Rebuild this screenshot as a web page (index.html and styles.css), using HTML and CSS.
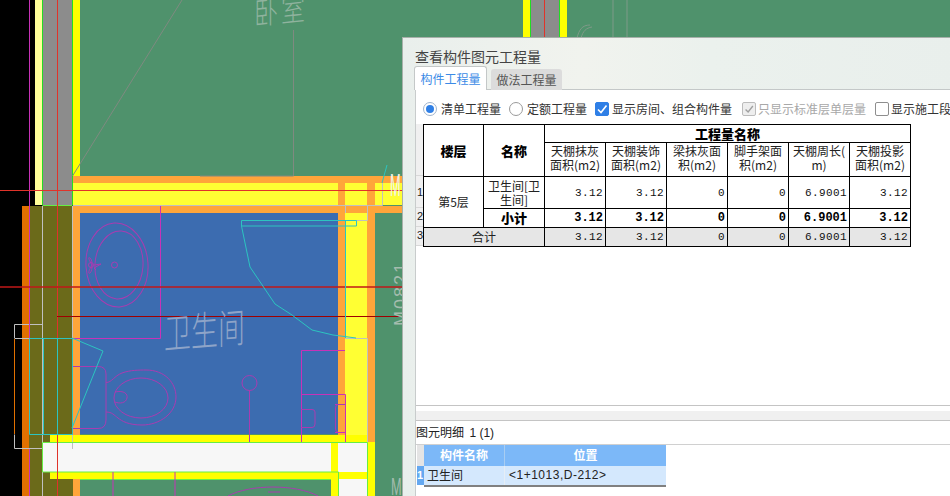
FILE: index.html
```html
<!DOCTYPE html>
<html lang="zh">
<head>
<meta charset="utf-8">
<title>查看构件图元工程量</title>
<link rel="stylesheet" href="styles.css">
</head>
<body>
<div class="stage">
  <svg class="cad" width="950" height="496" viewBox="0 0 950 496">
    <rect class="f-black" x="0" y="0" width="950" height="496"/>
    <rect class="f-room" x="73" y="0" width="877" height="496"/>
    <rect class="f-pale" x="35" y="0" width="7" height="205"/>
    <rect class="f-gray" x="43" y="0" width="29" height="205"/>
    <rect class="f-yellow" x="73" y="0" width="7" height="176"/>
    <rect class="f-line-green" x="42" y="0" width="1" height="205"/>
    <rect class="f-line-green" x="72" y="0" width="1" height="205"/>
    <rect class="f-yellow" x="523" y="0" width="7" height="60"/>
    <rect class="f-gray" x="531" y="0" width="28" height="60"/>
    <rect class="f-line-green" x="530" y="0" width="1" height="60"/>
    <rect class="f-line-green" x="559" y="0" width="1" height="60"/>
    <rect class="f-yellow" x="560" y="0" width="7" height="60"/>

    <rect class="f-orange" x="73" y="176" width="329" height="7"/>
    <rect class="f-bright" x="73" y="183" width="329" height="22"/>
    <rect class="f-orange" x="73" y="206" width="329" height="7"/>
    <rect class="f-blue" x="80" y="213" width="258" height="221"/>
    <rect class="f-orange" x="338" y="183" width="7" height="252"/>
    <rect class="f-bright" x="345" y="213" width="22" height="222"/>
    <rect class="f-orange" x="367" y="183" width="8" height="259"/>
    <rect class="f-orange" x="73" y="206" width="7" height="290"/>
    <rect class="f-deep" x="22" y="206" width="7" height="290"/>
    <rect class="f-olive" x="29" y="206" width="44" height="290"/>

    <rect class="f-yellow" x="50" y="435" width="317" height="7"/>
    <rect class="f-yellow" x="50" y="472" width="317" height="7"/>
    <rect class="f-white" x="42" y="442" width="325" height="30"/>
    <rect class="f-white" x="339" y="479" width="28" height="17"/>
    <rect class="f-room" x="80" y="479" width="251" height="17"/>
    <rect class="f-yellow" x="331" y="442" width="7" height="54"/>
    <rect class="f-yellow" x="367" y="442" width="8" height="54"/>

    <path class="s-gray" d="M72.500 176L182 0M293.500 30V176H200"/>
    <path class="s-light" d="M42.500 206V442M42.500 472V496M72.500 206V338M73 205.500H382.500V183M345.500 205V213M367.500 205V220.500H345M345 338.500H367.500V442M14.500 338V324.500H42M14.500 338.500H42M14.500 434.500V448.500H42M72.500 434V449"/>
    <path class="s-orangeline" d="M14.500 339V434"/>
    <path class="s-green" d="M42.500 205.500H72.500M42.500 472V442.500H367.500V496M42.500 472H338.500V496M80 479.500H331"/>
    <path class="s-magenta" d="M29.500 0V206M29.500 206V338M29.500 449V496M160.500 206V338.500H73M73 366.500H80M73 428.500H80M301.500 442V350.500H345M301.500 394.500H345.500V442M335 404.500H345M335 432.500H345M113 472V496M175 472V496"/>
    <path class="s-purple" d="M72 366.500H98Q106 366.500 106 374V420Q106 428.500 98 428.500H72M106 382.500C112 382.500 114 376 122 373C130 370 140 370 146 370C165 370 176 383 176 397C176 413 160 425 142 425C128 425 122 421 118 418C114 415 112 412 106 412M115 392C124 390 128 394 127 398C126 403 120 404 115 402M249.500 390V442M301 409.500H312Q315 409.500 315 412V424Q315 427.500 312 427.500H301M345 404.500H338Q335.500 404.500 335.500 408V429Q335.500 432 338 432"/>
    <ellipse class="s-purple" cx="141" cy="398" rx="27" ry="20"/>
    <ellipse class="s-purple" cx="117" cy="265" rx="31" ry="42" transform="rotate(-4 117 265)"/>
    <ellipse class="s-purple" cx="119" cy="265" rx="24" ry="34" transform="rotate(4 119 265)"/>
    <circle class="s-purple" cx="114.500" cy="265" r="3"/>
    <path class="s-purple" d="M94 265L101 264L94 268L96 270M92 265C88 258 88 257 90 258C92 260 92 262 92 265M92 265C88 272 88 274 90 273C92 271 92 268 92 265"/>
    <circle class="s-purple" cx="91" cy="265" r="2.500"/>
    <circle class="s-purple" cx="249.500" cy="383" r="7.500"/>
    <path class="s-purple" d="M228 496C250 484 296 484 318 496M268 492H280"/>
    <path class="s-red" d="M0 190.500H402M57.500 0V496M544.500 0V60"/>
    <path class="s-darkred" d="M0 287H402"/>
    <path class="s-maroon" d="M57 316.500H402"/>
    <path class="s-cyan" d="M29.500 434.500V338.500H72.500V434.500ZM43.500 338V434M57.500 338V434M72 338L103 351L72 428M241.500 220.500H356.500V226H241.500ZM241.500 226L250 267L275 304L292 315L312 330L333 335L356 338M345.500 220V338M382 183L387 165"/>
    <path class="s-sketch" d="M577 38C579 30 582 25 590 25M581 38C583 31 586 28 592 27M613 0V37M627 0V37"/>
    <text class="t-cad t-room" transform="translate(254 25) skewY(-6) scale(1 1.300)">卧室</text>
    <text class="t-cad t-bath" transform="translate(164 349) skewY(-5) scale(1 1.500)">卫生间</text>
    <text class="t-cad t-code" transform="translate(407 326) rotate(-90)">M0821</text>
    <text class="t-cad t-m t-m-top" transform="translate(390 196) scale(.8 2)">M</text>
    <text class="t-cad t-m" transform="translate(391 495) scale(.8 1.500)">M</text>
  </svg>

  <section class="dialog">
    <h1 class="dialog-title">查看构件图元工程量</h1>
    <div class="tabs">
      <div class="tab tab-active">构件工程量</div>
      <div class="tab">做法工程量</div>
    </div>
    <div class="panel">
      <div class="options">
        <label class="opt"><span class="radio radio-on"></span>清单工程量</label>
        <label class="opt"><span class="radio"></span>定额工程量</label>
        <label class="opt">
          <span class="check check-on"><svg width="14" height="14" viewBox="0 0 14 14"><path d="M3 7.500L6 10.500L11.500 3.500"/></svg></span>显示房间、组合构件量
        </label>
        <label class="opt opt-off">
          <span class="check check-off"><svg width="12" height="12" viewBox="0 0 14 14"><path d="M3 7.500L6 10.500L11.500 3.500"/></svg></span>只显示标准层单层量
        </label>
        <label class="opt opt-last"><span class="check"></span>显示施工段</label>
      </div>

      <div class="grid-wrap">
        <div class="row-heads">
          <div class="rh rh-top"></div>
          <div class="rh rh-1">1</div>
          <div class="rh rh-2">2</div>
          <div class="rh rh-3">3</div>
        </div>
        <table class="qty">
          <colgroup>
            <col class="c-a"><col class="c-b"><col class="c-num"><col class="c-num"><col class="c-num"><col class="c-num"><col class="c-num"><col class="c-num">
          </colgroup>
          <thead>
            <tr class="r-a">
              <th rowspan="2" class="big">楼层</th>
              <th rowspan="2" class="big">名称</th>
              <th colspan="6" class="big">工程量名称</th>
            </tr>
            <tr class="r-b">
              <td class="sub">天棚抹灰<br>面积(m2)</td>
              <td class="sub">天棚装饰<br>面积(m2)</td>
              <td class="sub">梁抹灰面<br>积(m2)</td>
              <td class="sub">脚手架面<br>积(m2)</td>
              <td class="sub">天棚周长(<br>m)</td>
              <td class="sub">天棚投影<br>面积(m2)</td>
            </tr>
          </thead>
          <tbody>
            <tr class="r-c">
              <td rowspan="2" class="ctr">第5层</td>
              <td class="ctr">卫生间[卫<br>生间]</td>
              <td class="num">3.12</td><td class="num">3.12</td><td class="num">0</td><td class="num">0</td><td class="num">6.9001</td><td class="num">3.12</td>
            </tr>
            <tr class="r-d">
              <th class="big">小计</th>
              <td class="num b">3.12</td><td class="num b">3.12</td><td class="num b">0</td><td class="num b">0</td><td class="num b">6.9001</td><td class="num b">3.12</td>
            </tr>
            <tr class="r-e">
              <td colspan="2" class="ctr">合计</td>
              <td class="num">3.12</td><td class="num">3.12</td><td class="num">0</td><td class="num">0</td><td class="num">6.9001</td><td class="num">3.12</td>
            </tr>
          </tbody>
        </table>
      </div>

      <div class="splitter"></div>
      <div class="detail-head">图元明细&nbsp;&nbsp;<span class="count">1 (1)</span></div>
      <div class="detail">
        <div class="d-heads">
          <div class="d-rh"></div>
          <div class="d-rh d-rh-on">1</div>
        </div>
        <div class="d-table">
          <div class="d-row d-row-head"><div class="d-a">构件名称</div><div class="d-b">位置</div></div>
          <div class="d-row d-row-body"><div class="d-a">卫生间</div><div class="d-b">&lt;1+1013,D-212&gt;</div></div>
        </div>
      </div>
    </div>
  </section>
</div>
</body>
</html>
```

FILE: styles.css
```css
* { box-sizing: border-box; }
html, body { margin: 0; padding: 0; overflow: hidden; }
body { width: 950px; height: 496px; font-family: "Noto Sans CJK SC", "Liberation Sans", sans-serif; }

.stage { position: relative; width: 950px; height: 496px; overflow: hidden; background: #000; }
.cad { position: absolute; left: 0; top: 0; display: block; }
.cad rect { shape-rendering: crispEdges; }

.f-black { fill: #000; }
.f-room { fill: #4f926c; }
.f-pale { fill: #ffff99; }
.f-gray { fill: #8c8c8c; }
.f-yellow { fill: #ffff00; }
.f-bright { fill: #ffff33; }
.f-orange { fill: #ffa53a; }
.f-blue { fill: #3c6cb0; }
.f-deep { fill: #e07000; }
.f-olive { fill: #6b6a1a; }
.f-white { fill: #f7f7f7; }
.f-line-green { fill: #22dd22; }

.cad path, .cad ellipse, .cad circle { fill: none; stroke-width: 1; }
.s-green { stroke: #66ee44; }
.s-gray { stroke: #7f8a80; }
.s-light { stroke: #c0c0c0; }
.s-orangeline { stroke: #e07000; }
.s-magenta { stroke: #c832b8; }
.cad .s-purple { stroke: #a93cb0; }
.s-red { stroke: #e0332a; }
.cad .s-darkred { stroke: #c01818; stroke-opacity: .75; stroke-width: 2; }
.s-maroon { stroke: #a00000; }
.cad .s-cyan { stroke: #2cc4c0; }
.s-sketch { stroke: #7f9a88; }

.t-cad { font-family: "Noto Sans CJK SC", "Liberation Sans", sans-serif; font-weight: 300; }
.t-room { font-size: 24px; letter-spacing: 3px; fill: #8fb39e; }
.t-bath { font-size: 27px; fill: #8ea4c8; }
.t-code { font-size: 18px; letter-spacing: 2px; fill: #a4bcae; font-family: "Liberation Sans", sans-serif; }
.t-m { font-size: 16px; fill: #a4bcae; font-family: "Liberation Sans", sans-serif; }
.t-m-top { fill: #f0f4e8; }

.dialog {
  position: absolute; left: 402px; top: 37px; width: 560px; height: 470px;
  display: flex; flex-direction: column;
  border: 1px solid #a8b0aa;
  background: linear-gradient(90deg, #e9efec 0%, #f1f3ee 32%, #ebf1ed 55%, #e9efec 100%);
}
.dialog-title { margin: 0; height: 28px; padding: 8px 0 0 12px; font-size: 14px; line-height: 20px; font-weight: 400; color: #444; }

.tabs { display: flex; align-items: flex-end; height: 24px; padding-left: 11px; gap: 4px; margin-bottom: -1px; position: relative; z-index: 1; }
.tab { height: 21px; width: 71px; border-radius: 3px 3px 0 0; background: #dcdcdc; color: #555; font-size: 12px; line-height: 21px; text-align: center; }
.tab-active { height: 24px; width: 73px; line-height: 24px; background: #fff; color: #3b8ae6; border: 1px solid #c4c8c8; border-bottom: 0; }

.panel { flex: 1; margin-left: 12px; display: flex; flex-direction: column; background: #fff; border-top: 1px solid #c4c8c8; border-left: 1px solid #c8cccc; }

.options { display: flex; gap: 8px; height: 28px; padding: 9px 0 0 7px; white-space: nowrap; flex: none; }
.opt { display: flex; align-items: center; gap: 4px; height: 19px; font-size: 12px; color: #333; }
.opt-off { color: #a8a8a8; margin-left: 2px; }
.opt-last { margin-left: 1px; }
.radio { width: 14px; height: 14px; border-radius: 50%; border: 1px solid #9a9a9a; background: #fff; display: flex; align-items: center; justify-content: center; }
.radio-on { border-color: #a0b4cc; }
.radio-on::after { content: ""; width: 8px; height: 8px; border-radius: 50%; background: #2f7fe6; }
.check { width: 14px; height: 14px; border: 1px solid #8e8e8e; border-radius: 2px; background: #fff; display: flex; align-items: center; justify-content: center; margin-right: -2px; }
.check svg { display: block; flex: none; }
.check path { fill: none; stroke-width: 1.600; }
.check-on { background: #2f7fe6; border-color: #2f7fe6; margin-right: -1px; }
.check-on path { stroke: #fff; }
.check-off { background: #eeeeee; border-color: #bcbcbc; }
.check-off path { stroke: #a0a0a0; }

.grid-wrap { display: flex; height: 287px; padding-top: 6px; flex: none; }
.row-heads { width: 7px; flex: none; overflow: hidden; font-size: 11px; color: #222; }
.rh { background: #f0f0f0; border-bottom: 1px solid #d8d8d8; font-family: "Liberation Sans", sans-serif; line-height: 16px; padding-left: 1px; }
.rh-top { height: 52px; }
.rh-1 { height: 32px; padding-top: 8px; }
.rh-2 { height: 19px; }
.rh-3 { height: 19px; }

.qty { border-collapse: collapse; table-layout: fixed; width: 488px; height: 122px; align-self: flex-start; font-size: 12px; color: #111; }
.c-a { width: 60px; }
.c-b { width: 61px; }
.c-num { width: 61px; }
.qty th, .qty td { border: 1px solid #000; padding: 0; text-align: center; line-height: 14px; font-size: 12px; }
.qty th { font-weight: 700; }
.qty .big { font-size: 13px; font-weight: 900; color: #000; }
.r-a { height: 18px; }
.r-b { height: 34px; }
.r-c { height: 32px; }
.r-d { height: 19px; }
.r-e { height: 19px; background: #e6e6e6; }
.qty .num { text-align: right; padding-right: 2px; font-family: "Liberation Mono", monospace; font-size: 11px; letter-spacing: .4px; }
.qty .b { font-weight: 700; font-size: 12px; letter-spacing: 0; color: #000; }
.qty .sub { color: #222; padding-bottom: 3px; }
.ctr { color: #222; }

.splitter { height: 15px; border-top: 1px solid #c4c4c4; background: linear-gradient(#fff 0, #fff 5px, #f0f0f0 5px); flex: none; }
.detail-head { height: 25px; border-top: 1px solid #c4c4c4; border-bottom: 1px solid #d0d0d0; font-size: 12px; line-height: 21px; color: #222; flex: none; }
.count { font-family: "Liberation Sans", sans-serif; }
.detail { display: flex; padding-left: 1px; flex: none; }
.d-heads { width: 7px; flex: none; }
.d-rh { height: 21px; background: #e4e4e4; }
.d-rh-on { height: 19px; background: #64a8f0; color: #fff; font-size: 11px; font-weight: 700; line-height: 19px; font-family: "Liberation Sans", sans-serif; overflow: hidden; }
.d-table { width: 242px; border-bottom: 2px solid #808080; }
.d-row { display: flex; }
.d-row-head { height: 21px; background: #7cb8f8; color: #fff; font-weight: 700; font-size: 12px; line-height: 20px; text-align: center; }
.d-row-body { height: 19px; background: #d4e8fd; color: #222; font-size: 12px; line-height: 18px; }
.d-a { width: 81px; border-right: 1px solid #a8cdf2; }
.d-row-body .d-a { padding-left: 3px; border-right-color: #e6eef6; }
.d-b { width: 161px; }
.d-row-body .d-b { padding-left: 4px; font-family: "Liberation Sans", sans-serif; letter-spacing: .5px; }
```
